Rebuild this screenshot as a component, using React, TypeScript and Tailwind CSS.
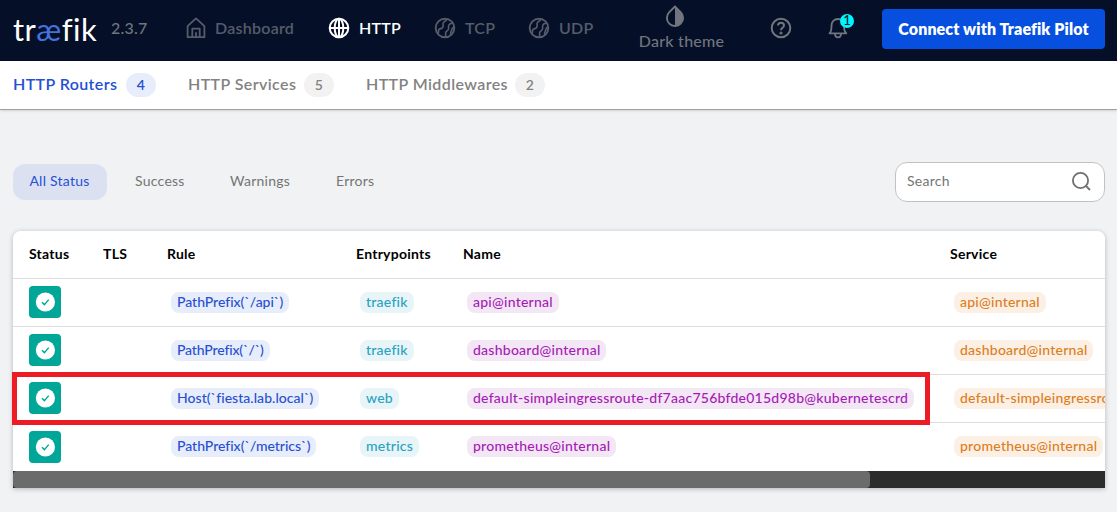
import type { ReactNode } from "react";

function HomeIcon() {
  return (
    <svg width="20" height="22" viewBox="0 0 20 22" fill="none" stroke="currentColor" strokeWidth="1.8" strokeLinejoin="round">
      <path d="M1.6 9.2 10 1.4l8.400 7.800V20.200H1.600z" />
      <path d="M6.300 20v-8.300h7.400V20M10 15.200V20" />
    </svg>
  );
}

function GlobeIcon() {
  return (
    <svg width="22" height="22" viewBox="0 0 22 22" fill="none" stroke="currentColor" strokeWidth="2">
      <circle cx="11" cy="11" r="9.300" />
      <ellipse cx="11" cy="11" rx="4.300" ry="9.300" />
      <path d="M1.700 11h18.600M11 1.700v18.600" />
    </svg>
  );
}

function WorldIcon() {
  return (
    <svg width="22" height="22" viewBox="0 0 22 22" fill="none" stroke="currentColor" strokeWidth="1.600" strokeLinejoin="round">
      <circle cx="11" cy="11" r="9.300" strokeWidth="1.900" />
      <path d="M13 2c-.6 2.800-3.700 1.600-3.900 4.400-.1 2 .4 3.200-.6 4.300-1.200 1.300-3.400.6-3.900 2.500-.3 1.500.2 2.300-.5 3.500" />
      <path d="M19.300 6.400c-2.600-.4-4.400.6-4.700 2.600-.2 1.700.3 2.500-.4 3.700-.8 1.300-2.200 1.300-2.500 3-.2 1.400.2 3-.4 4.400M16.800 18c-.5-1.800-.1-3 .5-4 .6-1.100.1-2.700 2.700-4.200" />
    </svg>
  );
}

function DropIcon() {
  return (
    <svg width="20" height="22" viewBox="0 0 20 22">
      <path d="M10 1.500 4.300 7.200a8.100 8.100 0 1 0 11.400 0z" fill="none" stroke="currentColor" strokeWidth="1.900" />
      <path d="M10 1.500v19.300a8.100 8.100 0 0 0 5.700-13.600z" fill="currentColor" />
    </svg>
  );
}

function HelpIcon() {
  return (
    <svg width="22" height="22" viewBox="0 0 22 22" fill="none" stroke="currentColor" strokeWidth="2">
      <circle cx="11" cy="11" r="9.300" />
      <path d="M8 8.600c0-3.900 6-3.700 6-.2 0 2.400-3 2.300-3 4.900" />
      <circle cx="11" cy="16" r=".6" fill="currentColor" />
    </svg>
  );
}

function BellIcon() {
  return (
    <svg width="20" height="22" viewBox="0 0 20 22" fill="none" stroke="currentColor" strokeWidth="1.800" strokeLinejoin="round">
      <path d="M1.500 16.300c2-1.800 2-3.300 2-7.300C3.500 4.500 6.200 2 10 2s6 2.500 6 7c0 4 .2 5.500 2.300 7.300z" />
      <path d="M7 17c.2 4.500 5.800 4.500 6 0" />
    </svg>
  );
}

function CheckBadge() {
  return (
    <div className="flex h-8 w-8 items-center justify-center rounded-[4px] bg-[#00a697]">
      <svg width="20" height="20" viewBox="0 0 20 20">
        <circle cx="10.400" cy="10" r="9.600" fill="#fff" />
        <path d="m7 10.200 2.400 2.400 4.300-5" fill="none" stroke="#00a697" strokeWidth="1.400" />
      </svg>
    </div>
  );
}

function NavItem({ icon, label, box, active }: { icon: ReactNode; label: string; box: string; active?: boolean }) {
  return (
    <div className={`flex shrink-0 items-center pb-[5px] ${box} ${active ? "text-white" : "text-[#565c69]"}`}>
      <span>{icon}</span>
      <span className="ml-[9px] whitespace-nowrap pb-px font-semibold">{label}</span>
    </div>
  );
}

function SubTab({ label, count, box, active }: { label: string; count: number; box: string; active?: boolean }) {
  return (
    <div className={`flex shrink-0 items-center justify-between ${box} ${active ? "text-[#2650d2]" : "text-[#828282]"}`}>
      <span className="whitespace-nowrap pb-0.5 font-semibold tracking-[0.4px]">{label}</span>
      <span className={`flex h-6 w-[30px] items-center justify-center rounded-full pb-px text-sm font-semibold ${active ? "bg-[#e8edfb]" : "bg-[#f2f2f2]"}`}>
        {count}
      </span>
    </div>
  );
}

function Pill({ children, tone }: { children: ReactNode; tone: string }) {
  return (
    <span className={`ml-1 flex h-[21px] w-max items-center rounded-lg px-1.5 pb-0.5 whitespace-nowrap font-medium ${tone}`}>{children}</span>
  );
}

const grid = "grid w-[1400px] grid-cols-[74px_64px_189px_107px_487px_463px] items-center pl-4";

const rows = [
  { rule: "PathPrefix(`/api`)", rw: "tracking-[-0.03px]", entry: "traefik", name: "api@internal" },
  { rule: "PathPrefix(`/`)", rw: "tracking-[-0.15px]", entry: "traefik", name: "dashboard@internal" },
  { rule: "Host(`fiesta.lab.local`)", rw: "tracking-[0.04px]", entry: "web", name: "default-simpleingressroute-df7aac756bfde015d98b@kubernetescrd" },
  { rule: "PathPrefix(`/metrics`)", rw: "tracking-[-0.02px]", entry: "metrics", name: "prometheus@internal" },
];

export default function App() {
  return (
    <div className="h-[512px] w-[1117px] overflow-hidden bg-[#f1f2f4] font-['Lato',sans-serif] text-sm tracking-[0.25px]">
      <header className="flex h-[61px] items-center bg-[#050f28] pl-[13px] text-base">
        <div className="flex h-10 w-[98px] shrink-0 items-center pb-[3px] text-[31px] leading-none tracking-[0.45px] text-white">
          <span>tr</span>
          <span className="text-[#4472de]">æ</span>
          <span>fik</span>
        </div>
        <span className="w-[75px] shrink-0 pb-[5px] font-medium text-[#71757d]">2.3.7</span>
        <NavItem icon={<HomeIcon />} label="Dashboard" box="w-[142px]" />
        <NavItem icon={<GlobeIcon />} label="HTTP" box="w-[106px]" active />
        <NavItem icon={<WorldIcon />} label="TCP" box="w-[94px]" />
        <NavItem icon={<WorldIcon />} label="UDP" box="w-[111px]" />
        <div className="flex w-[85px] shrink-0 flex-col items-center pb-1 text-[#71757d]">
          <span className="mr-[13px]"><DropIcon /></span>
          <span className="mt-0.5 whitespace-nowrap font-medium leading-6">Dark theme</span>
        </div>
        <div className="ml-[46px] flex items-center gap-9 pb-[5px] text-[#71757d]">
          <HelpIcon />
          <div className="relative">
            <BellIcon />
            <span className="absolute -top-[3px] left-3 flex h-3.5 w-3.5 items-center justify-center rounded-full bg-[#00f5ff] text-[13px] font-medium tracking-normal text-[#06202c]">1</span>
          </div>
        </div>
        <button className="mb-[3px] ml-[34px] h-10 w-[223px] shrink-0 rounded bg-[#064fdf] pb-px font-extrabold tracking-[0.12px] whitespace-nowrap text-white">
          Connect with Traefik Pilot
        </button>
      </header>

      <nav className="flex h-[49px] items-center gap-8 border-b border-[#a0a0a1] bg-white pl-[13px] text-base shadow-sm">
        <SubTab label="HTTP Routers" count={4} box="w-[143px]" active />
        <SubTab label="HTTP Services" count={5} box="w-[146px]" />
        <SubTab label="HTTP Middlewares" count={2} box="w-[179px]" />
      </nav>

      <main className="px-3 pt-[52px]">
        <div className="flex h-10 items-center pl-px text-[#757575]">
          <span className="flex h-9 w-[94px] items-center justify-center rounded-xl bg-[#dce1f1] pr-px pb-0.5 text-[#2650d2]">All Status</span>
          <span className="ml-7 w-[95px] pb-0.5">Success</span>
          <span className="w-[106px] pb-0.5">Warnings</span>
          <span className="pb-0.5">Errors</span>
          <div className="ml-auto flex h-10 w-[210px] items-center justify-between rounded-xl border border-[#c2c2c2] bg-white pr-3 pb-0.5 pl-[11px]">
            <span>Search</span>
            <svg width="22" height="22" viewBox="0 0 22 22" fill="none" stroke="#6f6f6f" strokeWidth="1.800">
              <circle cx="10.500" cy="10.500" r="7.600" />
              <path d="m16 16 4 4" />
            </svg>
          </div>
        </div>

        <section className="relative mt-[29px] ml-px w-[1092px] rounded-t-lg shadow-[0_1px_5px_rgba(0,0,0,0.25)]">
          <div className="overflow-hidden rounded-t-lg bg-white">
            <div className={`${grid} h-12 border-b border-[#dedede] pb-0.5 font-bold text-black`}>
              <span>Status</span>
              <span>TLS</span>
              <span>Rule</span>
              <span>Entrypoints</span>
              <span>Name</span>
              <span>Service</span>
            </div>
            {rows.map((row) => (
              <div key={row.rule} className={`${grid} group h-12 border-b border-[#dedede] last:border-transparent`}>
                <div className="pb-0.5 group-last:pb-0"><CheckBadge /></div>
                <span />
                <Pill tone={`bg-[#e8edfb] text-[#2650d2] ${row.rw}`}>{row.rule}</Pill>
                <Pill tone="bg-[#e7f5f9] text-[#2aa2c1]">{row.entry}</Pill>
                <Pill tone="bg-[#f4e7f5] text-[#a41cb5]">{row.name}</Pill>
                <Pill tone="bg-[#fcf0e5] text-[#dc7e1e]">{row.name}</Pill>
              </div>
            ))}
          </div>
          <div className="h-[17px] bg-[#2c2c2c]">
            <div className="h-full w-[857px] rounded bg-[#6b6b6b]" />
          </div>
          <div className="absolute top-[141px] -left-px h-[53px] w-[918px] border-[5px] border-[#ed1c24]" />
        </section>
      </main>
    </div>
  );
}
